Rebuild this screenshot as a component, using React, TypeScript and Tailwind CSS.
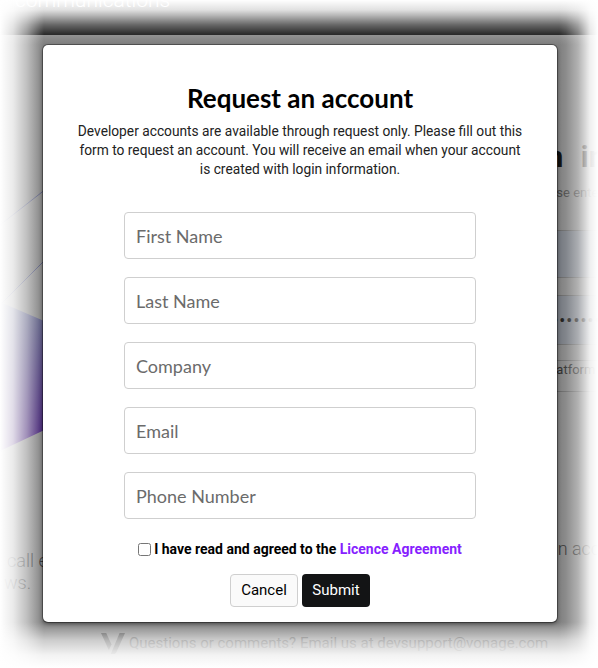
import React from 'react';

const FIELDS = ['First Name', 'Last Name', 'Company', 'Email', 'Phone Number'];

const VonageMark = () => (
  <svg width="24" height="21" viewBox="0 0 24 21" fill="#8a8a8a">
    <path d="M0 0h5.2l5.3 11.6-2.6 5.6z" />
    <path d="M18.6 0H24l-8.6 19.2c-.5 1.2-1.4 1.8-2.7 1.8H9.8z" />
  </svg>
);

export default function App() {
  return (
    <div className="relative h-[668px] w-[598px] overflow-hidden bg-white font-['Roboto',sans-serif]">
      {/* page behind the dialog */}
      <div className="flex h-full flex-col">
        <header className="relative z-20 h-[35px] shrink-0 bg-black pl-[15px]">
          <div className="-mt-[12px] text-[21px] font-light leading-[24px] text-white">communications</div>
        </header>

        <main className="flex flex-1">
          <section className="flex w-[500px] shrink-0 flex-col">
            <svg width="500" height="515" viewBox="0 0 500 515" className="block">
              <defs>
                <linearGradient id="band" x1="0" y1="267" x2="0" y2="416" gradientUnits="userSpaceOnUse">
                  <stop offset="0" stopColor="#b4c0ff" />
                  <stop offset="1" stopColor="#7a2ce0" />
                </linearGradient>
              </defs>
              <path d="M0 190 L60 143" stroke="#9aa4e8" strokeWidth="1" fill="none" />
              <path d="M0 270 L60 210" stroke="#9aa4e8" strokeWidth="1" fill="none" />
              <polygon points="0,267 165,338 0,416" fill="url(#band)" />
            </svg>
            <div className="text-[18px] font-light leading-[22px] text-[#555]">
              <div className="pl-[7px]">call experiences with our APIs</div>
              <div className="pl-[4px]">ws.</div>
            </div>
          </section>

          <section className="flex flex-1 flex-col pt-[104px]">
            <h1 className="ml-[3px] whitespace-nowrap text-[30px] font-bold leading-[36px] text-[#1a1a1a] [word-spacing:10px]">
              Sign in
            </h1>
            <p className="ml-[31px] mt-[10px] whitespace-nowrap text-[13px] leading-[16px] text-[#888]">Please enter your details</p>
            <div className="ml-[20px] mt-[29px] h-[48px] rounded-[4px] border border-[#ccc] bg-[#e8f0fe]" />
            <div className="ml-[20px] mt-[17px] flex h-[50px] items-center rounded-[4px] border border-[#ccc] bg-[#e8f0fe] pl-[10px] text-[18px] tracking-[1px] text-[#333]">
              ••••••••••
            </div>
            <div className="ml-[20px] mt-[15px] h-[32px] border-y border-[#ccc] bg-white pl-[25px] pt-[1px] text-[13px] leading-[15px] text-[#555]">
              Platform
            </div>
            <p className="ml-[48px] mt-[146px] whitespace-nowrap text-[18px] font-light leading-[22px] text-[#555]">an account?</p>
          </section>
        </main>

        <footer className="flex h-[50px] shrink-0 items-center gap-[4px] pl-[101px] text-[15px] text-[#8a8a8a]">
          <VonageMark />
          <span>Questions or comments? Email us at devsupport@vonage.com</span>
        </footer>
      </div>

      {/* backdrop */}
      <div className="absolute inset-0 z-10 bg-black/50" />

      {/* dialog */}
      <div className="absolute inset-0 z-30 flex justify-center pl-[2px] pt-[45px]">
        <div className="flex h-[577px] w-[514px] flex-col items-center rounded-[5px] bg-white pt-[37px] shadow-[0_0_0_1px_rgba(0,0,0,0.35),0_2px_4px_rgba(0,0,0,0.45)]">
          <h2 className="font-['Lato',sans-serif] text-[26px] font-bold leading-[32px] text-black">Request an account</h2>
          <p className="mt-[8px] text-center text-[13.75px] leading-[19px] text-[#222]">
            Developer accounts are available through request only. Please fill out this
            <br />
            form to request an account. You will receive an email when your account
            <br />
            is created with login information.
          </p>
          <form className="mt-[33px] flex w-[352px] flex-col gap-[18px]">
            {FIELDS.map((f) => (
              <input
                key={f}
                placeholder={f}
                className="h-[47px] w-full rounded-[4px] border border-[#cfcfcf] px-[11px] font-['Lato',sans-serif] text-[18px] text-[#333] outline-none placeholder:text-[#6b6b6b]"
              />
            ))}
          </form>
          <label className="mt-[20px] flex items-center gap-[3px] text-[14px] font-bold leading-[20px] text-black">
            <input type="checkbox" className="m-0 size-[13px]" />
            <span>
              I have read and agreed to the <span className="text-[#871fff]">Licence Agreement</span>
            </span>
          </label>
          <div className="mt-[15px] flex gap-[4px]">
            <button className="h-[33px] w-[68px] rounded-[4px] border border-[#cfcfcf] bg-[#fafafa] text-[15px] text-black">
              Cancel
            </button>
            <button className="h-[33px] w-[68px] rounded-[4px] bg-[#131415] text-[15px] text-white">Submit</button>
          </div>
        </div>
      </div>

      {/* feathered edges of the capture */}
      <div className="pointer-events-none absolute inset-x-0 top-0 z-40 h-[45px] bg-[linear-gradient(to_bottom,#fff_0px,rgba(255,255,255,0.88)_10px,rgba(255,255,255,0.73)_15px,rgba(255,255,255,0.4)_25px,rgba(255,255,255,0.2)_33px,rgba(255,255,255,0.06)_40px,rgba(255,255,255,0)_45px)]" />
      <div className="pointer-events-none absolute inset-y-0 left-0 z-40 w-[44px] bg-[linear-gradient(to_right,#fff_0px,rgba(255,255,255,0.84)_13px,rgba(255,255,255,0.5)_27px,rgba(255,255,255,0.1)_40px,rgba(255,255,255,0)_44px)]" />
      <div className="pointer-events-none absolute inset-y-0 right-0 z-40 w-[40px] bg-[linear-gradient(to_left,#fff_0px,rgba(255,255,255,0.88)_8px,rgba(255,255,255,0.4)_20px,rgba(255,255,255,0.1)_32px,rgba(255,255,255,0)_39px)]" />
      <div className="pointer-events-none absolute inset-x-0 bottom-0 z-40 h-[46px] bg-[linear-gradient(to_top,#fff_0px,rgba(255,255,255,0.9)_13px,rgba(255,255,255,0.6)_28px,rgba(255,255,255,0.05)_44px,rgba(255,255,255,0)_46px)]" />
    </div>
  );
}
